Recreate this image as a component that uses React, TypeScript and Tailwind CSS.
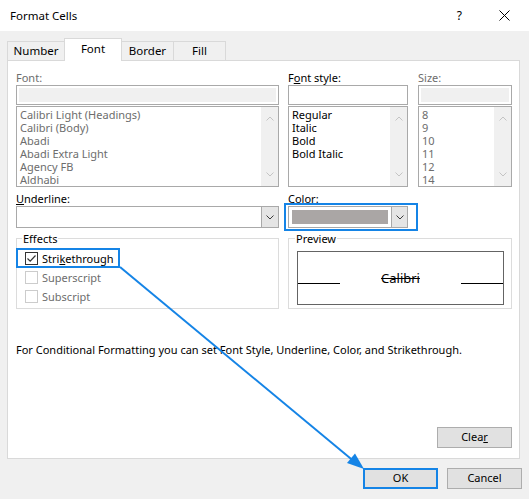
import React from "react";

const BLUE = "#1584e6";

function Chev({ up, color, w = 8 }: { up?: boolean; color: string; w?: number }) {
  return (
    <svg width={w} height={5} viewBox="0 0 8 5" className="block">
      <path
        d={up ? "M0.5 4.5 L4 1 L7.5 4.5" : "M0.5 0.5 L4 4 L7.5 0.5"}
        stroke={color}
        fill="none"
        strokeWidth={1}
      />
    </svg>
  );
}

function ListBox({ items, grey }: { items: string[]; grey?: boolean }) {
  return (
    <div className="mt-px h-[81px] border border-[#a9a9a9] bg-white flex">
      <div
        className={`flex-1 pt-[1px] pl-[3px] text-[11px] leading-[13px] overflow-hidden ${
          grey ? "text-[#6d6d6d]" : "text-black"
        }`}
      >
        {items.map((t) => (
          <div key={t} className="whitespace-nowrap">
            {t}
          </div>
        ))}
      </div>
      <div className="w-[17px] bg-[#f0f0f0] flex flex-col items-center justify-between pt-[9px] pb-[9px]">
        <Chev up color="#c4c4c4" />
        <Chev color="#c4c4c4" />
      </div>
    </div>
  );
}

function GreyInput() {
  return (
    <div className="h-[20px] border border-[#a9a9a9] bg-white p-[2px]">
      <div className="h-full bg-[#f0f0f0]" />
    </div>
  );
}

function Combo({ swatch }: { swatch?: boolean }) {
  return (
    <div className="h-[22px] border border-[#a9a9a9] bg-white flex">
      <div className="flex-1 p-[3px]">
        {swatch && <div className="h-full w-[96px] bg-[#aaa6a5]" />}
      </div>
      <div className="w-[17px] bg-[#e5e5e5] border-l border-[#a9a9a9] flex items-center justify-center">
        <Chev color="#3c3c3c" />
      </div>
    </div>
  );
}

function CheckRow({
  label,
  checked,
  disabled,
}: {
  label: React.ReactNode;
  checked?: boolean;
  disabled?: boolean;
}) {
  return (
    <div className="h-[19px] flex items-center">
      <div
        className={`ml-[3px] w-[13px] h-[13px] border bg-white flex items-center justify-center ${
          disabled ? "border-[#cccccc]" : "border-[#333333]"
        }`}
      >
        {checked && (
          <svg width="11" height="11" viewBox="0 0 11 11">
            <path d="M1.5 5.5 L4.2 8.2 L9.5 2.5" stroke="#333" strokeWidth="1.2" fill="none" />
          </svg>
        )}
      </div>
      <span
        className={`ml-[4px] leading-[15px] ${disabled ? "text-[#6d6d6d]" : "text-black"}`}
      >
        {label}
      </span>
    </div>
  );
}

export default function App() {
  const tabBase = "flex items-center justify-center border border-b-0 border-[#d9d9d9]";
  return (
    <div className="relative w-[529px] h-[499px] bg-[#f0f0f0] flex flex-col font-['Noto_Sans',sans-serif] text-[11px] text-black overflow-hidden">
      {/* Title bar */}
      <div className="h-[31px] shrink-0 bg-white flex items-center pl-[10px] pr-[19px]">
        <span className="text-[11.5px]">Format Cells</span>
        <span className="ml-auto mr-[37px] text-[12px]">?</span>
        <svg width="11" height="11" viewBox="0 0 11 11">
          <path d="M0.5 0.5L10.5 10.5M10.5 0.5L0.5 10.5" stroke="#000" strokeWidth="1" />
        </svg>
      </div>

      {/* Tabs */}
      <div className="flex items-end h-[22px] mt-[7px] ml-[7px] shrink-0 text-[11.5px]">
        <div className={`${tabBase} w-[58px] h-[19px] bg-[#f0f0f0]`}>Number</div>
        <div className={`${tabBase} -ml-px w-[58px] h-[23px] -mb-px bg-white relative z-10 pb-[3px]`}>
          Font
        </div>
        <div className={`${tabBase} -ml-px w-[53px] h-[19px] bg-[#f0f0f0]`}>Border</div>
        <div className={`${tabBase} -ml-px w-[53px] h-[19px] bg-[#f0f0f0]`}>Fill</div>
      </div>

      {/* Panel */}
      <div className="ml-[7px] w-[513px] h-[399px] shrink-0 border border-[#d9d9d9] bg-white flex flex-col pt-[9px] pl-[8px] pr-[7px] pb-[10px]">
        <div className="grid grid-cols-[263px_224px] gap-x-[9px]">
          {/* Row A */}
          <div>
            <div className="h-[15px] leading-[15px] text-[#6d6d6d]">Font:</div>
            <GreyInput />
            <ListBox
              grey
              items={[
                "Calibri Light (Headings)",
                "Calibri (Body)",
                "Abadi",
                "Abadi Extra Light",
                "Agency FB",
                "Aldhabi",
              ]}
            />
          </div>
          <div className="flex gap-[10px]">
            <div className="w-[120px]">
              <div className="h-[15px] leading-[15px]">
                F<span className="underline">o</span>nt style:
              </div>
              <div className="h-[20px] border border-[#a9a9a9] bg-white" />
              <ListBox items={["Regular", "Italic", "Bold", "Bold Italic"]} />
            </div>
            <div className="w-[94px]">
              <div className="h-[15px] leading-[15px] text-[#6d6d6d]">Size:</div>
              <GreyInput />
              <ListBox grey items={["8", "9", "10", "11", "12", "14"]} />
            </div>
          </div>

          {/* Row B */}
          <div className="mt-[4px]">
            <div className="h-[15px] leading-[15px]">
              <span className="underline">U</span>nderline:
            </div>
            <Combo />
          </div>
          <div className="mt-[4px]">
            <div className="h-[15px] leading-[15px]">
              <span className="underline">C</span>olor:
            </div>
            <div className="relative w-[120px]">
              <Combo swatch />
              <div className="absolute left-[-4px] top-[-3px] w-[134px] h-[28px] border-2 border-[#1584e6]" />
            </div>
          </div>

          {/* Row C */}
          <fieldset className="mt-[3px] border border-[#dcdcdc] px-[5px] pt-[3px] pb-[2px]">
            <legend className="leading-[15px] px-[1px]">Effects</legend>
            <div className="relative">
              <CheckRow
                checked
                label={
                  <>
                    Stri<span className="underline">k</span>ethrough
                  </>
                }
              />
              <div className="absolute left-[-6px] top-[-1px] w-[104px] h-[20px] border-2 border-[#1584e6]" />
            </div>
            <CheckRow disabled label="Superscript" />
            <CheckRow disabled label="Subscript" />
          </fieldset>
          <fieldset className="mt-[3px] border border-[#dcdcdc] px-[6px] pb-[3px]">
            <legend className="leading-[15px] px-[1px]">Preview</legend>
            <div className="mt-[5px] ml-[2px] w-[207px] h-[54px] border border-[#646464] bg-white flex items-center">
              <div className="w-[42px] h-px bg-black mt-[10px]" />
              <div className="flex-1 text-center text-[13px] line-through leading-[16px]">Calibri</div>
              <div className="w-[42px] h-px bg-black mt-[10px]" />
            </div>
          </fieldset>
        </div>

        <div className="mt-[33px] leading-[15px] whitespace-nowrap">
          For Conditional Formatting you can set Font Style, Underline, Color, and Strikethrough.
        </div>

        <div className="flex-1" />
        <div className="self-end w-[75px] h-[21px] bg-[#e1e1e1] border border-[#adadad] flex items-center justify-center">
          <span>
            Clea<span className="underline">r</span>
          </span>
        </div>
      </div>

      {/* Buttons */}
      <div className="flex justify-end gap-[9px] pr-[7px] mt-[9px]">
        <div className="w-[75px] h-[21px] bg-[#e1e1e1] border-2 border-[#1584e6] flex items-center justify-center">
          OK
        </div>
        <div className="w-[75px] h-[21px] bg-[#e1e1e1] border border-[#adadad] flex items-center justify-center">
          Cancel
        </div>
      </div>

      {/* Callout arrow */}
      <svg className="absolute inset-0 pointer-events-none" width="529" height="499">
        <line x1="120" y1="267" x2="356" y2="463" stroke={BLUE} strokeWidth="2" />
        <polygon points="364,469 347,463 355,453.5" fill={BLUE} />
      </svg>
    </div>
  );
}
